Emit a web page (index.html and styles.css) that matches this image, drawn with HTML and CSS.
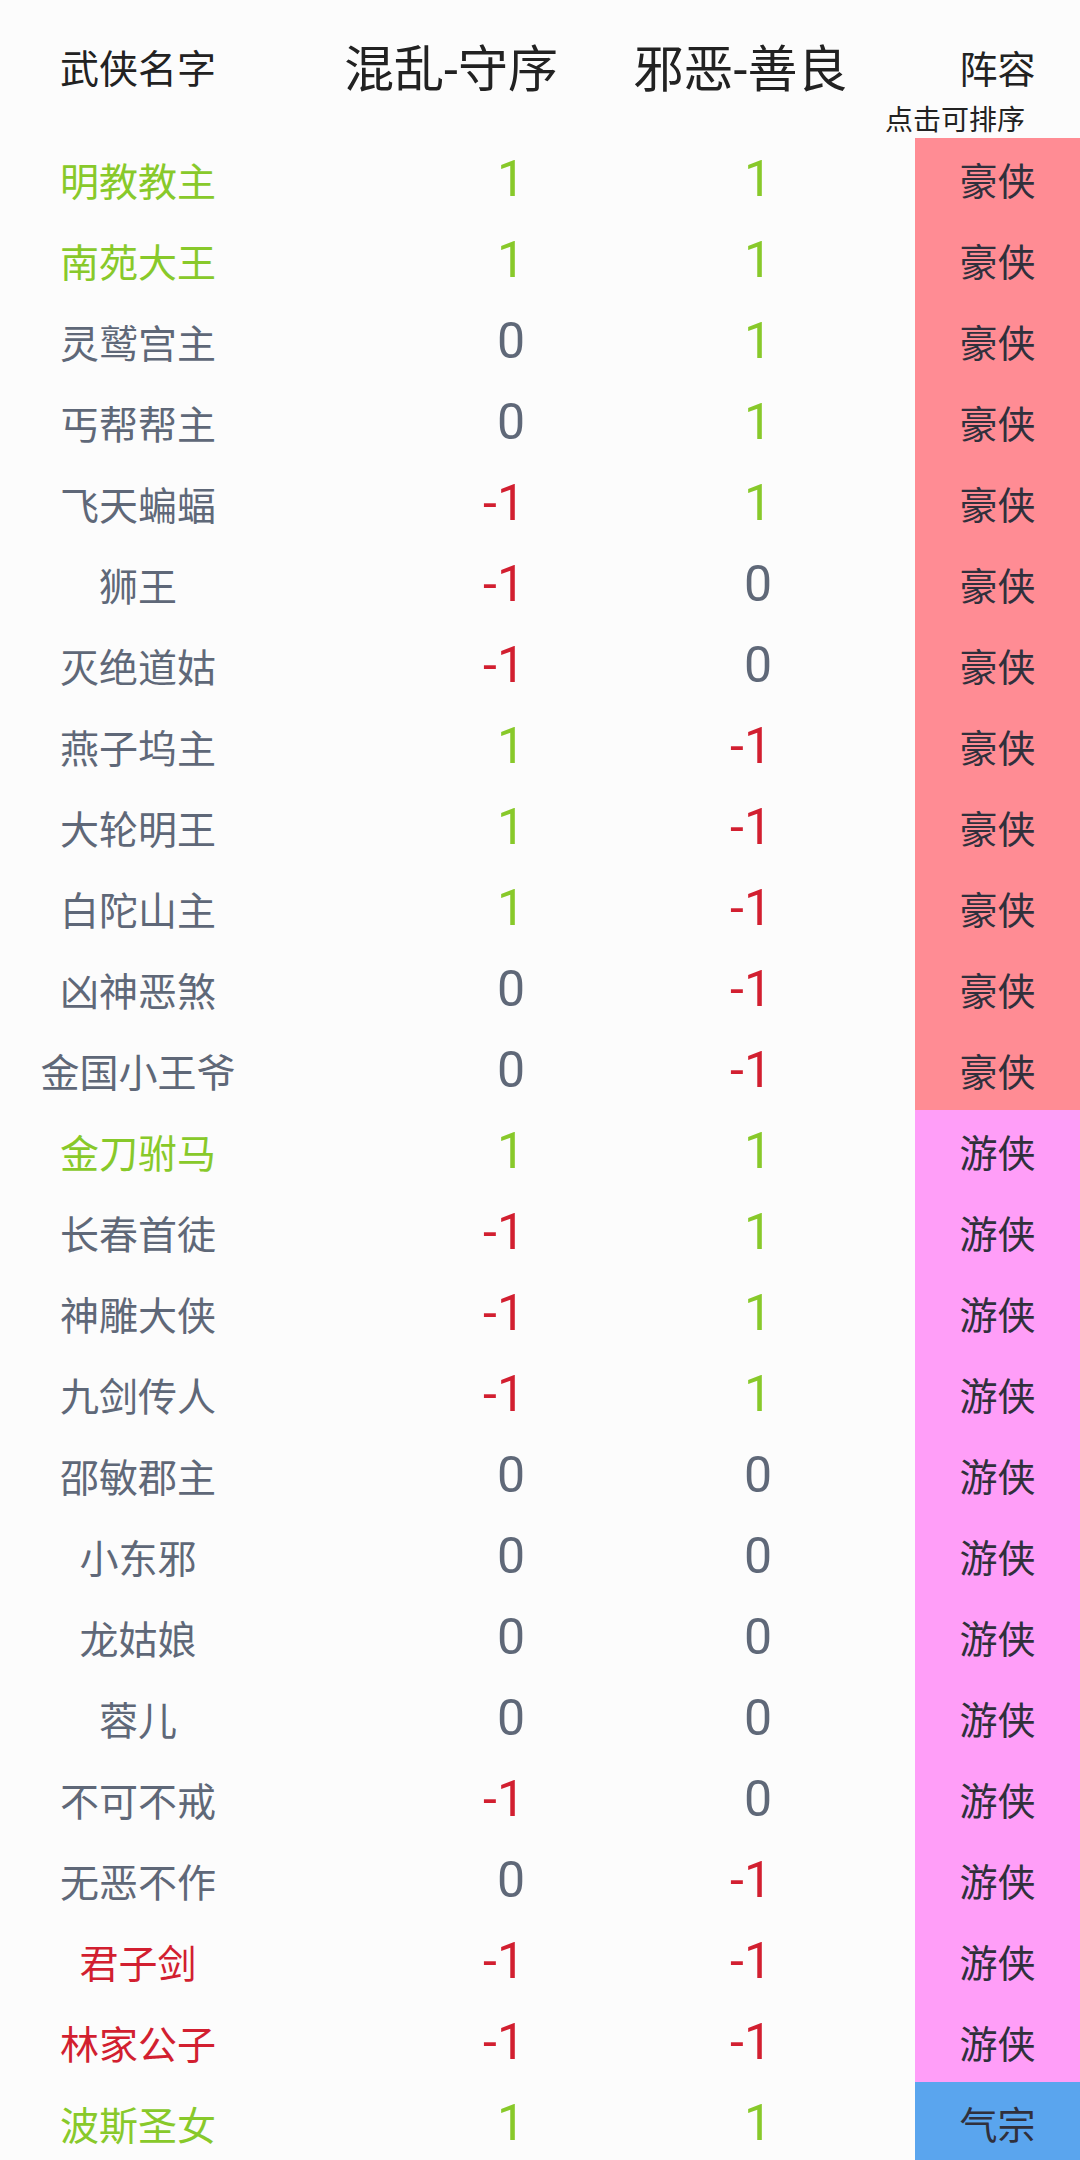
FILE: index.html
```html
<!DOCTYPE html>
<html>
<head>
    <meta charset="UTF-8">
    <meta name="viewport" content="width=device-width, initial-scale=1.0">
    <title>武侠阵营</title>
    <link rel="stylesheet" href="styles.css">
</head>
<body>
    <div class="table">
        <div class="head">
            <div class="h-name">武侠名字</div>
            <div class="h-axis h-law">混乱-守序</div>
            <div class="h-axis h-good">邪恶-善良</div>
            <div class="h-team">
                <span>阵容</span>
                <span class="hint">点击可排序</span>
            </div>
        </div>

        <div class="row"><div class="name good">明教教主</div><div class="num law good">1</div><div class="num moral good">1</div><div class="team hao">豪侠</div></div>
        <div class="row"><div class="name good">南苑大王</div><div class="num law good">1</div><div class="num moral good">1</div><div class="team hao">豪侠</div></div>
        <div class="row"><div class="name">灵鹫宫主</div><div class="num law">0</div><div class="num moral good">1</div><div class="team hao">豪侠</div></div>
        <div class="row"><div class="name">丐帮帮主</div><div class="num law">0</div><div class="num moral good">1</div><div class="team hao">豪侠</div></div>
        <div class="row"><div class="name">飞天蝙蝠</div><div class="num law bad">-1</div><div class="num moral good">1</div><div class="team hao">豪侠</div></div>
        <div class="row"><div class="name">狮王</div><div class="num law bad">-1</div><div class="num moral">0</div><div class="team hao">豪侠</div></div>
        <div class="row"><div class="name">灭绝道姑</div><div class="num law bad">-1</div><div class="num moral">0</div><div class="team hao">豪侠</div></div>
        <div class="row"><div class="name">燕子坞主</div><div class="num law good">1</div><div class="num moral bad">-1</div><div class="team hao">豪侠</div></div>
        <div class="row"><div class="name">大轮明王</div><div class="num law good">1</div><div class="num moral bad">-1</div><div class="team hao">豪侠</div></div>
        <div class="row"><div class="name">白陀山主</div><div class="num law good">1</div><div class="num moral bad">-1</div><div class="team hao">豪侠</div></div>
        <div class="row"><div class="name">凶神恶煞</div><div class="num law">0</div><div class="num moral bad">-1</div><div class="team hao">豪侠</div></div>
        <div class="row"><div class="name">金国小王爷</div><div class="num law">0</div><div class="num moral bad">-1</div><div class="team hao">豪侠</div></div>

        <div class="row"><div class="name good">金刀驸马</div><div class="num law good">1</div><div class="num moral good">1</div><div class="team you">游侠</div></div>
        <div class="row"><div class="name">长春首徒</div><div class="num law bad">-1</div><div class="num moral good">1</div><div class="team you">游侠</div></div>
        <div class="row"><div class="name">神雕大侠</div><div class="num law bad">-1</div><div class="num moral good">1</div><div class="team you">游侠</div></div>
        <div class="row"><div class="name">九剑传人</div><div class="num law bad">-1</div><div class="num moral good">1</div><div class="team you">游侠</div></div>
        <div class="row"><div class="name">邵敏郡主</div><div class="num law">0</div><div class="num moral">0</div><div class="team you">游侠</div></div>
        <div class="row"><div class="name">小东邪</div><div class="num law">0</div><div class="num moral">0</div><div class="team you">游侠</div></div>
        <div class="row"><div class="name">龙姑娘</div><div class="num law">0</div><div class="num moral">0</div><div class="team you">游侠</div></div>
        <div class="row"><div class="name">蓉儿</div><div class="num law">0</div><div class="num moral">0</div><div class="team you">游侠</div></div>
        <div class="row"><div class="name">不可不戒</div><div class="num law bad">-1</div><div class="num moral">0</div><div class="team you">游侠</div></div>
        <div class="row"><div class="name">无恶不作</div><div class="num law">0</div><div class="num moral bad">-1</div><div class="team you">游侠</div></div>
        <div class="row"><div class="name bad">君子剑</div><div class="num law bad">-1</div><div class="num moral bad">-1</div><div class="team you">游侠</div></div>
        <div class="row"><div class="name bad">林家公子</div><div class="num law bad">-1</div><div class="num moral bad">-1</div><div class="team you">游侠</div></div>

        <div class="row"><div class="name good">波斯圣女</div><div class="num law good">1</div><div class="num moral good">1</div><div class="team qi">气宗</div></div>
    </div>
</body>
</html>
```

FILE: styles.css
```css
body {
    margin: 0;
    padding: 0;
    background-color: #fcfcfc;
    font-family: Roboto, "Noto Sans CJK SC", sans-serif;
    color: #5f6878; /* gray for neutral values */
}

.table {
    width: 1080px;
}

/* columns: name | chaos-law | evil-good | team */
.head,
.row {
    display: grid;
    grid-template-columns: 276px 350px 289px 165px;
}

.head {
    height: 138px;
    color: #222;
}

.h-name {
    font-size: 39px;
    text-align: center;
    padding-top: 45px;
    line-height: 50px;
}

.h-axis {
    font-size: 50px;
    text-align: center;
    padding-top: 40px;
    line-height: 60px;
}

.h-good {
    padding-right: 60px;
}

.h-team {
    display: flex;
    flex-direction: column;
    align-items: center;
    padding-top: 45px;
    font-size: 38px;
    line-height: 50px;
}

.h-team .hint {
    align-self: flex-end;
    margin-right: 55px;
    margin-top: 9px;
    font-size: 28px;
    line-height: 34px;
    white-space: nowrap;
}

.row {
    height: 81px;
    align-items: center;
}

.name {
    font-size: 39px;
    text-align: center;
}

.num {
    font-size: 50px;
    text-align: right;
}

.law {
    padding-right: 101px;
}

.moral {
    padding-right: 143px;
}

.good {
    color: #88c92a;
}

.bad {
    color: #d21f30;
}

.team {
    height: 100%;
    display: flex;
    align-items: center;
    justify-content: center;
    font-size: 38px;
    color: #30303c;
}

.hao {
    background-color: #ff8c94;
}

.you {
    background-color: #ff9ef8;
}

.qi {
    background-color: #5aa5ee;
}
```
